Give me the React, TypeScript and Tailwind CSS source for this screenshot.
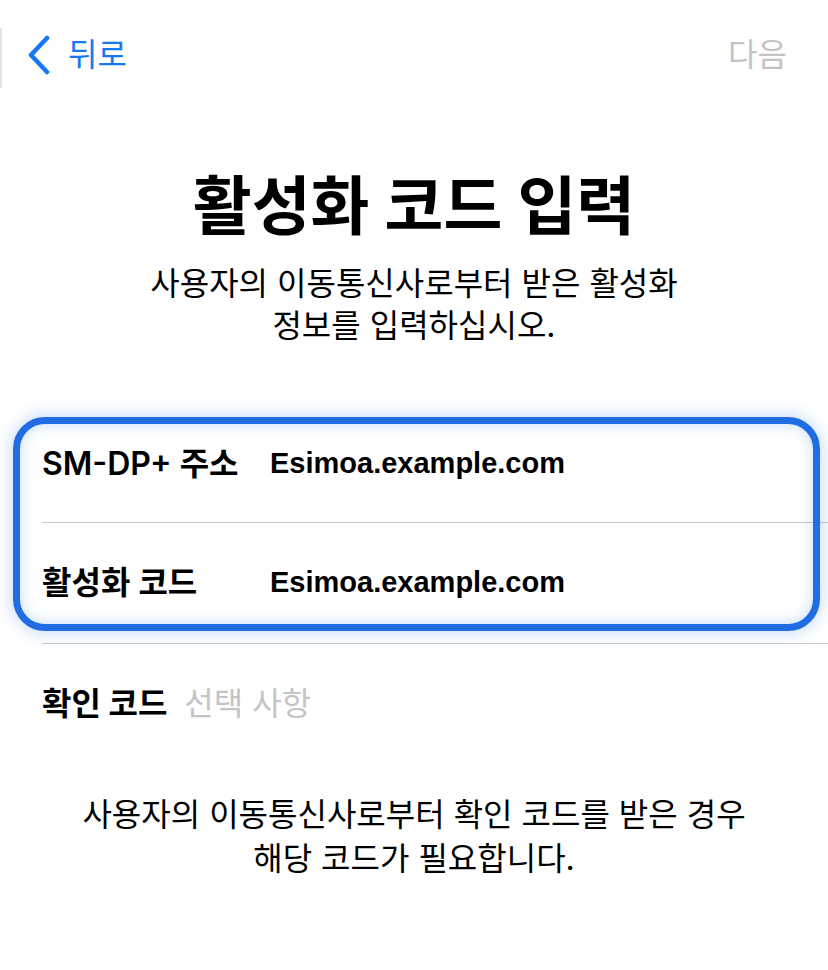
import React from 'react'

const kr = { fontFamily: 'Inter, "Noto Sans CJK KR", sans-serif' }

// 행 하나 (라벨 + 값)
function Row({ label, value, h }: { label: string; value: string; h: string }) {
  return (
    <div className={`flex items-center pl-[42px] ${h}`}>
      <div className="w-[228px] shrink-0 text-[32px] font-semibold text-black" style={kr}>
        {label}
      </div>
      <div
        className="text-[29px] font-bold text-black"
        style={{ fontFamily: '"Liberation Sans", Arial, sans-serif' }}
      >
        {value}
      </div>
    </div>
  )
}

export default function App() {
  return (
    <div className="w-[828px] h-[970px] bg-white overflow-hidden" style={kr}>
      {/* 상단 내비게이션 */}
      <div className="h-[110px] flex items-center justify-between pr-[41px]">
        <div className="flex items-center h-full">
          <div className="w-[2px] h-[60px] bg-[#e6e6e6] self-start mt-[28px]" />
          <svg width="26" height="40" viewBox="0 0 26 40" className="ml-[24px]" fill="none">
            <path d="M21 3 L5 20 L21 37" stroke="#1677f2" strokeWidth="4.5" strokeLinecap="round" strokeLinejoin="round" />
          </svg>
          <span className="ml-[16px] text-[32px] text-[#1677f2]">뒤로</span>
        </div>
        <span className="text-[32px] text-[#c4c4c6]">다음</span>
      </div>

      <h1 className="mt-[58px] text-center text-[64px] leading-[76px] font-bold text-black">
        활성화 코드 입력
      </h1>
      <p className="mt-[19px] text-center text-[32px] leading-[42px] text-black">
        사용자의 이동통신사로부터 받은 활성화
        <br />
        정보를 입력하십시오.
      </p>

      {/* 입력 목록 */}
      <div className="relative mt-[59px]">
        <Row label="SM-DP+ 주소" value="Esimoa.example.com" h="h-[116px]" />
        <div className="ml-[42px] h-px bg-[#c8c8cc]" />
        <Row label="활성화 코드" value="Esimoa.example.com" h="h-[120px]" />
        <div className="ml-[42px] h-px bg-[#c8c8cc]" />
        <div className="absolute left-[13px] right-[8px] top-[11px] h-[214px] rounded-[32px] border-[7px] border-[#1f6ce3] shadow-[0_0_18px_rgba(31,108,227,0.3),inset_0_0_14px_rgba(31,108,227,0.25)] pointer-events-none" />
      </div>

      <div className="h-[120px] flex items-center pl-[42px] text-[32px]">
        <span className="font-bold text-black">확인 코드</span>
        <span className="ml-[17px] text-[#c4c4c6]">선택 사항</span>
      </div>

      <p className="mt-[29px] text-center text-[32px] leading-[44px] text-black">
        사용자의 이동통신사로부터 확인 코드를 받은 경우
        <br />
        해당 코드가 필요합니다.
      </p>
    </div>
  )
}
